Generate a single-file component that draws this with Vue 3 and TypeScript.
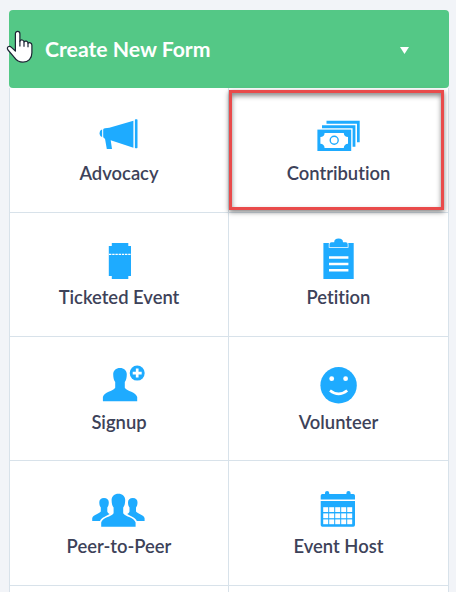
<script setup lang="ts">
interface FormType {
  id: string
  label: string
}

const formTypes: FormType[] = [
  { id: 'advocacy', label: 'Advocacy' },
  { id: 'contribution', label: 'Contribution' },
  { id: 'ticket', label: 'Ticketed Event' },
  { id: 'petition', label: 'Petition' },
  { id: 'signup', label: 'Signup' },
  { id: 'volunteer', label: 'Volunteer' },
  { id: 'peer', label: 'Peer-to-Peer' },
  { id: 'host', label: 'Event Host' },
]
const calendarColumns = [15.2, 21.2, 27.2, 33.2, 39.2]
const calendarRows = [20.2, 26.4, 32.4]
</script>

<template>
  <main class="page">
    <header class="header">
      <span class="title">Create New Form</span>
      <svg class="caret" width="9" height="7" viewBox="0 0 9 7"><path d="M0 0H9L4.5 7Z" /></svg>
    </header>

    <div class="grid">
      <div v-for="item in formTypes" :key="item.id" class="cell">
        <svg class="icon" width="60" height="44" viewBox="0 0 60 44">
          <g v-if="item.id === 'advocacy'">
            <path d="M13.1 15.4V22.9C11.5 22.5 10.6 21 10.6 19.2S11.5 15.8 13.1 15.4Z" />
            <path d="M14.2 16C14.2 14.9 14.8 14.4 16 14.3L20.3 13.7L44.4 6.7V33.7L21.7 26.2L23 35H17.8L16 24.7C14.7 24.2 14.2 23.3 14.2 22Z" />
            <rect x="45.9" y="5.3" width="2.6" height="29" rx=".7" />
          </g>
          <g v-else-if="item.id === 'contribution'">
            <path d="M18.5 6.8H51.7V28.3H49V9.7H18.5Z" />
            <path d="M14 11.2H47.4V32.7H44.6V14.2H14Z" />
            <rect x="9.4" y="15.6" width="33.8" height="21.4" />
            <path class="white" d="M16.6 18.9H35.8C35.8 21.3 37.6 23 40 23V29.8C37.6 29.8 35.8 31.6 35.8 34H16.6C16.6 31.6 14.8 29.8 12.4 29.8V23C14.8 23 16.6 21.3 16.6 18.9Z" />
            <circle class="ring" cx="26.2" cy="26.3" r="4" />
          </g>
          <g v-else-if="item.id === 'ticket'">
            <path d="M22.8 4H39.3V6.9H42V37.1H39.3V40H22.8V37.1H19.8V6.9H22.8Z" />
            <path class="perforation" d="M20 15.4H42" />
          </g>
          <g v-else-if="item.id === 'petition'">
            <path d="M15.4 4H45.7V40H15.4Z" />
            <path class="clip" d="M21.5 8V5.2Q21.5 3.2 23.5 3.2H26.2Q26.2 -.4 30.6 -.4T35 3.2H37.7Q39.7 3.2 39.7 5.2V8Z" />
            <path class="lines" d="M21 18.5H40.4M21 25H40.4M21 31.2H40.4" />
          </g>
          <g v-else-if="item.id === 'signup'">
            <path d="M31 5C27 5 24.2 7.6 24.2 11.2C24.2 15 25 17.4 26.2 19V24.7C24.2 28 14.8 29.2 13.9 34V38.3H48.2V34C47.2 29.2 37.8 28 35.8 24.7V19C37 17.4 37.8 15 37.8 11.2C37.8 7.6 35 5 31 5Z" />
            <circle cx="48.2" cy="10.1" r="7.5" />
            <path class="plus" d="M43.7 10.1H52.7M48.2 5.6V14.6" />
          </g>
          <g v-else-if="item.id === 'volunteer'">
            <circle cx="30.6" cy="22.3" r="18.2" />
            <circle class="white" cx="23.7" cy="15.7" r="2.4" />
            <circle class="white" cx="37.6" cy="15.7" r="2.4" />
            <path class="smile" d="M22 27.5Q30.6 34.4 39.2 27.5" />
          </g>
          <g v-else-if="item.id === 'peer'">
            <path d="M15 11C12 11 10.3 12.7 10.3 15.2C10.3 17.8 10.9 19.3 11.8 20.5V24.5C10.3 27 3.8 27.7 3.2 31.2V34H11C12.3 30.5 17.5 29 20.6 27C19.4 26.3 18.6 25.6 18.3 24.5V20.5C19.2 19.3 19.8 17.8 19.8 15.2C19.8 12.7 18 11 15 11Z" />
            <path d="M43.8 11C46.8 11 48.5 12.7 48.5 15.2C48.5 17.8 47.9 19.3 47 20.5V24.5C48.5 27 55 27.7 55.6 31.2V34H47.8C46.5 30.5 41.3 29 38.2 27C39.4 26.3 40.2 25.6 40.5 24.5V20.5C39.6 19.3 39 17.8 39 15.2C39 12.7 40.8 11 43.8 11Z" />
            <path d="M29.4 6.7C25.4 6.7 22.6 9.3 22.6 12.9C22.6 16.7 23.4 18.9 24.6 20.5V26.2C22.6 29.5 13.1 30.7 12.2 35.5V39.7H46.6V35.5C45.7 30.7 36.2 29.5 34.2 26.2V20.5C35.4 18.9 36.2 16.7 36.2 12.9C36.2 9.3 33.4 6.7 29.4 6.7Z" />
          </g>
          <g v-else>
            <path d="M12.7 12.5V8.7Q12.7 7 14.4 7H17V6.1Q17 4 19.1 4T21.2 6.1V7H38.4V6.1Q38.4 4 40.5 4T42.6 6.1V7H45.3Q47 7 47 8.7V12.5Z" />
            <path d="M12.7 14H47V38Q47 39.7 45.3 39.7H14.4Q12.7 39.7 12.7 38Z" />
            <template v-for="y in calendarRows" :key="y">
              <rect v-for="x in calendarColumns" :key="x" class="white" :x="x" :y="y" width="5" height="4.8" />
            </template>
          </g>
        </svg>
        <span class="label">{{ item.label }}</span>
      </div>
    </div>

    <div class="highlight"></div>
    <svg class="cursor" width="27" height="34" viewBox="0 0 27 34">
      <path d="M15.4 18.5V3.6C15.4 .4 19.9 .4 19.9 3.6V11C20.7 9.1 24 9.4 24 12C25 10.2 28 10.7 28 13.2C29.2 11.8 31.9 12.5 31.9 15V22.5C31.9 28.4 28.3 32 23 32C18.2 32 16.3 30.1 14.3 27.1L8 19.8C6 16.6 9.3 15.2 11.7 17.4L15.4 20.8Z" transform="translate(-7 .2)" />
      <path class="creases" d="M19.9 10.5V16.2M24 12V16.6M28 13.2V17" transform="translate(-7 .2)" />
    </svg>
  </main>
</template>

<style>
body {
  margin: 0;
  overflow: hidden;
}
</style>

<style scoped>
.page {
  box-sizing: border-box;
  position: relative;
  height: 592px;
  padding: 10px 7px 0 9px;
  overflow: hidden;
  background: #f2f4f8;
  color: #3d4259;
  font-family: Lato, "Liberation Sans", sans-serif;
  font-variant-ligatures: none;
}
.header {
  box-sizing: border-box;
  display: flex;
  align-items: center;
  justify-content: space-between;
  height: 78px;
  padding: 0 40px 0 36px;
  border-radius: 4px;
  background: #54c886;
}
.title {
  color: #fff;
  font-size: 21.2px;
  font-weight: 700;
  line-height: 26px;
}
.caret {
  margin-top: 2px;
  fill: #fff;
}
.grid {
  display: grid;
  grid-template-columns: 219px 220px;
  grid-template-rows: 125px 124px 124px 125px 10px;
  border-left: 1px solid #d8e2ea;
  background: #fff linear-gradient(#d8e2ea, #d8e2ea) 218px 0 / 1px 100% no-repeat;
  box-shadow: inset -1px 0 #d8e2ea;
}
.cell {
  box-sizing: border-box;
  display: flex;
  flex-direction: column;
  align-items: center;
  padding: 26px 1px 0 0;
  border-bottom: 1px solid #d8e2ea;
}
.icon {
  flex: none;
  overflow: visible;
  fill: #1eabff;
}
.cell:nth-child(even) .icon {
  margin-right: 1px;
}
.label {
  margin-top: 4px;
  font-size: 18.4px;
  font-weight: 600;
  line-height: 22px;
  white-space: nowrap;
}
.cell:nth-child(3) .label,
.cell:nth-child(4) .label {
  margin-top: 3px;
}
.white {
  fill: #fff;
}
.ring {
  fill: none;
  stroke: #1eabff;
  stroke-width: 1.4;
}
.perforation,
.lines,
.plus,
.smile {
  fill: none;
  stroke: #fff;
}
.perforation {
  stroke-width: 1.3;
  stroke-dasharray: 2.4 .8;
}
.lines {
  stroke-width: 2.5;
}
.plus {
  stroke-width: 2.7;
}
.smile {
  stroke-width: 2.7;
}
.clip {
  stroke: #fff;
  stroke-width: 1.5;
  paint-order: stroke;
}
.highlight {
  box-sizing: border-box;
  position: absolute;
  top: 90px;
  left: 229px;
  width: 215px;
  height: 120px;
  border: 3px solid #e94b4b;
  box-shadow: 0 2px 5px rgb(0 0 0 / 50%), inset 0 3px 5px rgb(0 0 0 / 45%);
}
.cursor {
  position: absolute;
  top: 30px;
  left: 7px;
  fill: #fff;
  stroke: #1c2434;
  stroke-width: 1.2;
  stroke-linejoin: round;
  overflow: visible;
}
.creases {
  fill: none;
}
</style>
